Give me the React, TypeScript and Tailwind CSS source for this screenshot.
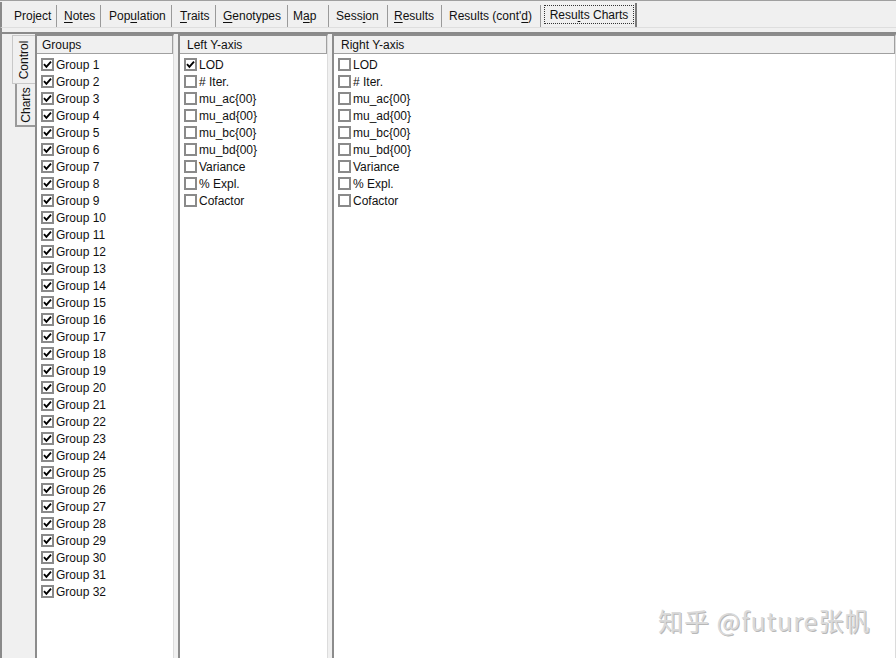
import React from 'react'

const tabs: { label: string; u: number; w: number; pl: number }[] = [
  { label: 'Project', u: 3, w: 49, pl: 6 },
  { label: 'Notes', u: 0, w: 44, pl: 7 },
  { label: 'Population', u: 3, w: 71, pl: 8 },
  { label: 'Traits', u: 0, w: 44, pl: 8 },
  { label: 'Genotypes', u: 0, w: 72, pl: 7 },
  { label: 'Map', u: 1, w: 41, pl: 5 },
  { label: 'Session', u: 4, w: 59, pl: 7 },
  { label: 'Results', u: 0, w: 54, pl: 6 },
  { label: "Results (cont'd)", u: 14, w: 99, pl: 7 },
]

const yItems = ['LOD', '# Iter.', 'mu_ac{00}', 'mu_ad{00}', 'mu_bc{00}', 'mu_bd{00}', 'Variance', '% Expl.', 'Cofactor']
const groups = Array.from({ length: 32 }, (_, i) => `Group ${i + 1}`)

function Underlined({ text, u }: { text: string; u: number }) {
  return (
    <>
      {text.slice(0, u)}
      <span className="underline underline-offset-2">{text[u]}</span>
      {text.slice(u + 1)}
    </>
  )
}

function Box({ checked }: { checked: boolean }) {
  return (
    <span className="w-[13px] h-[13px] border-2 border-[#8a8a8a] bg-white flex items-center justify-center shrink-0">
      {checked && (
        <svg width="9" height="9" viewBox="0 0 9 9">
          <path d="M1 4.2 L3.4 6.8 L8 1.6" fill="none" stroke="#000" strokeWidth="1.9" />
        </svg>
      )}
    </span>
  )
}

function Panel({ title, w, pl, items, checked }: { title: string; w: string; pl: string; items: string[]; checked: (i: number) => boolean }) {
  return (
    <div className={`${w} h-full flex flex-col border-l-2 border-t-2 border-[#8c8c8c] border-r border-r-[#dcdcdc] bg-white`}>
      <div className={`h-[18px] bg-[#f0f0f0] border-b border-[#a0a0a0] border-r border-r-[#a0a0a0] flex items-center ${pl} shrink-0`}>
        {title}
      </div>
      <div className="flex flex-col pt-[2px] pl-[4px]">
        {items.map((t, i) => (
          <div key={t} className="h-[17px] flex items-center gap-[2px]">
            <Box checked={checked(i)} />
            <span>{t}</span>
          </div>
        ))}
      </div>
    </div>
  )
}

export default function App() {
  return (
    <div
      className="relative w-[896px] h-[658px] overflow-hidden bg-[#f0f0f0] text-[12px] text-[#111] flex flex-col"
      style={{ fontFamily: '"Liberation Sans", Arial, sans-serif' }}
    >
      <div className="h-[2px] border-t border-[#a0a0a0] shrink-0" />
      <div className="h-[25px] flex items-stretch pl-[6px] border-l-2 border-[#8a8a8a] shrink-0">
        {tabs.map((t) => (
          <div
            key={t.label}
            style={{ width: t.w, paddingLeft: t.pl }}
            className="flex items-center pt-[4px] pb-[1px] border-r border-[#9a9a9a] mt-[3px] whitespace-nowrap"
          >
            <span className="mt-[-4px]">
              <Underlined text={t.label} u={t.u} />
            </span>
          </div>
        ))}
        <div className="w-[96px] flex items-start pt-[2px] pl-[3px] border-r-2 border-[#7a7a7a] mt-[1px]">
          <span className="w-[90px] h-[19px] border border-dotted border-[#333] flex items-center justify-center whitespace-nowrap">
            <Underlined text="Results Charts" u={4} />
          </span>
        </div>
      </div>
      <div className="h-[7px] border-t border-[#dedede] border-b-2 border-b-[#8a8a8a] border-l-2 border-l-[#8a8a8a] shrink-0" />
      <div className="flex-1 flex border-l-2 border-[#8a8a8a]">
        <div className="w-[33px] flex flex-col pt-[1px] pl-[10px] shrink-0">
          <div className="w-[23px] h-[49px] bg-[#f0f0f0] border-l border-t border-b border-[#c8c8c8] flex items-center justify-center">
            <span className="-rotate-90 whitespace-nowrap">Control</span>
          </div>
          <div className="ml-[3px] w-[20px] h-[43px] border-l-2 border-b-2 border-[#9a9a9a] flex items-center justify-center">
            <span className="-rotate-90 whitespace-nowrap">Charts</span>
          </div>
        </div>
        <Panel title="Groups" w="w-[139px]" pl="pl-[5px]" items={groups} checked={() => true} />
        <div className="w-[4px] shrink-0" />
        <Panel title="Left Y-axis" w="w-[150px]" pl="pl-[7px]" items={yItems} checked={(i) => i === 0} />
        <div className="w-[4px] shrink-0" />
        <Panel title="Right Y-axis" w="flex-1" pl="pl-[7px]" items={yItems} checked={() => false} />
      </div>
      <div
        className="absolute left-[658px] top-[602px] text-[25px] text-[#dadada] tracking-[1px] whitespace-nowrap"
        style={{ fontFamily: '"Noto Sans CJK SC", "Noto Sans", sans-serif', textShadow: '1px 1px 0 #b8b8b8' }}
      >
        知乎 @future张帆
      </div>
    </div>
  )
}
